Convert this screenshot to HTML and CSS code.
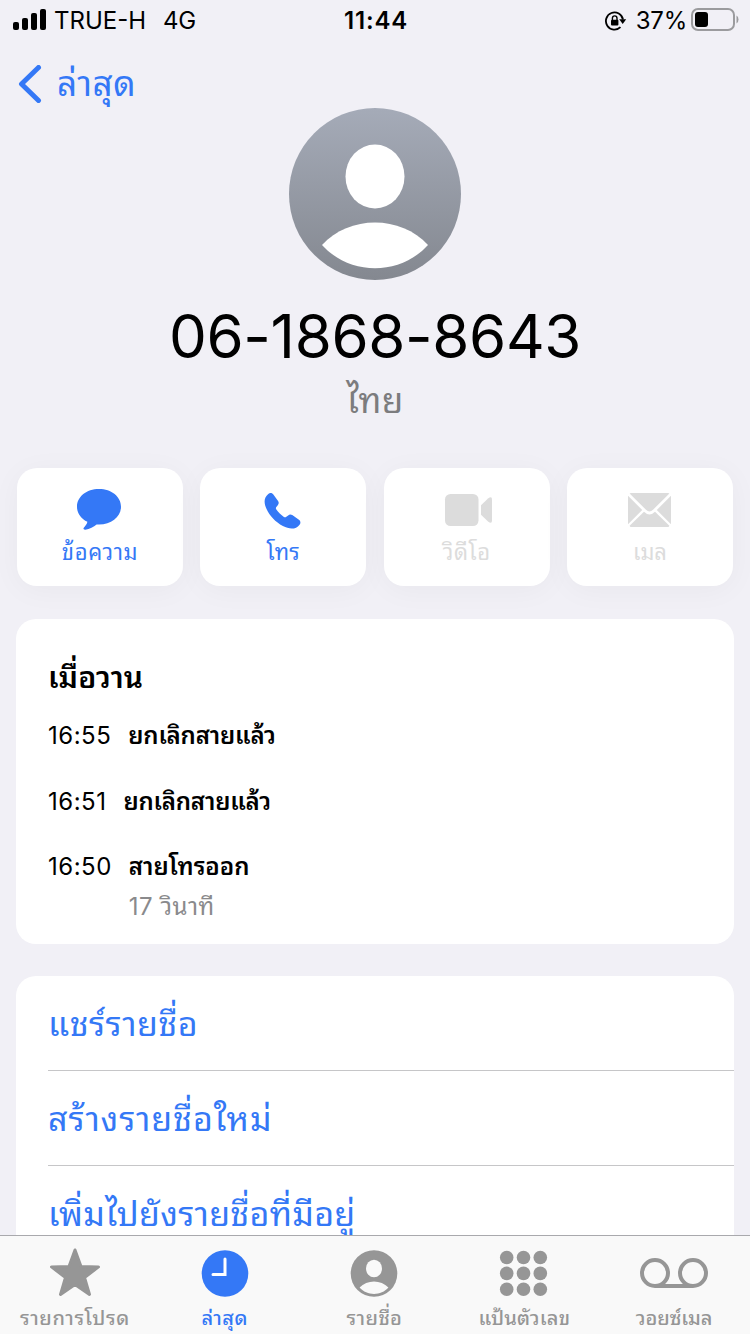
FILE: index.html
```html
<!DOCTYPE html>
<html lang="th">
<head>
    <meta charset="UTF-8">
    <meta name="viewport" content="width=device-width, initial-scale=1.0">
    <title>06-1868-8643</title>
    <link rel="stylesheet" href="styles.css">
</head>
<body>
    <div class="status-bar">
        <div class="status-left">
            <svg class="signal" width="34" height="22" viewBox="0 0 34 22">
                <rect x="0" y="13" width="6" height="8" rx="2"/>
                <rect x="9" y="9" width="6" height="12" rx="2"/>
                <rect x="18" y="4" width="6" height="17" rx="2"/>
                <rect x="27" y="0" width="6" height="21" rx="2"/>
            </svg>
            <span class="carrier">TRUE-H</span>
            <span class="network">4G</span>
        </div>
        <div class="status-time">11:44</div>
        <div class="status-right">
            <svg class="lock" width="22" height="20" viewBox="0 0 22 20">
                <path d="M15.5 16.2A8.6 8.6 0 1 1 18 8.5" fill="none" stroke="#000" stroke-width="1.8"/>
                <path d="M14.2 8.3h7l-3.5 4.6z"/>
                <rect x="6" y="8.8" width="7.4" height="5.6" rx="1"/>
                <path d="M7.4 9V7.2a2.3 2.3 0 0 1 4.6 0V9" fill="none" stroke="#000" stroke-width="1.4"/>
            </svg>
            <span class="percent">37%</span>
            <svg class="battery" width="48" height="24" viewBox="0 0 48 24">
                <rect x="1" y="1" width="42" height="21" rx="6" fill="none" stroke="#9b9b9e" stroke-width="2"/>
                <rect x="4" y="4" width="13" height="15" rx="3"/>
                <path d="M45.500 7.500q2 1 2 4t-2 4z" fill="#9b9b9e"/>
            </svg>
        </div>
    </div>

    <nav class="back">
        <svg width="24" height="38" viewBox="0 0 24 38">
            <path d="M20.500 2.500L3.500 19l17 16.500" fill="none" stroke="#3478f6" stroke-width="5" stroke-linecap="round" stroke-linejoin="round"/>
        </svg>
        <span class="back-label">ล่าสุด</span>
    </nav>

    <header>
        <svg class="avatar" width="172" height="172" viewBox="0 0 172 172">
            <defs>
                <linearGradient id="avatarFill" x1="0" y1="0" x2="0" y2="1">
                    <stop offset="0" stop-color="#a5abb8"/>
                    <stop offset="1" stop-color="#848890"/>
                </linearGradient>
            </defs>
            <circle cx="86" cy="86" r="86" fill="url(#avatarFill)"/>
            <ellipse cx="86" cy="68.500" rx="29.500" ry="32" fill="#fff"/>
            <path d="M33 137C60 107 112 107 139 137C111 168 61 168 33 137z" fill="#fff"/>
        </svg>
        <h1>06-1868-8643</h1>
        <p class="country">ไทย</p>
    </header>

    <div class="actions">
        <button class="action">
            <svg width="46" height="44" viewBox="1 0 46 44">
                <path d="M23 1C10.500 1 1 8.700 1 18.700c0 6.500 4 12.100 10.400 15.100-.5 2.300-1.800 4-3.600 5.900-.9 1 .1 2.200 1.500 2 4.500-.7 8.300-2.700 11.300-5.300l2.400.1C35.500 36.500 45 28.700 45 18.700S35.500 1 23 1z"/>
            </svg>
            <span class="msg-label">ข้อความ</span>
        </button>
        <button class="action">
            <svg width="46" height="44" viewBox="0 0 46 44">
                <path transform="translate(.4 .6) scale(.96)" d="M8.200 5.500C9.900 4 12 4.300 13.300 6L18.400 13c1 1.500.9 2.900-.3 4.300l-1.500 1.900c-.7.9-.6 1.600 0 2.500 2 2.900 4.900 5.700 7.900 7.800.9.600 1.700.6 2.500-.1l1.900-1.500c1.300-1.200 2.800-1.300 4.300-.3l6.900 4.800c1.800 1.300 2.100 3.300.7 5.200-4 5.400-10.600 4.900-17.400 1.400C15.700 34.900 9.600 28.300 6.400 21.300 3.500 14.800 3.400 9.500 8.200 5.500z"/>
            </svg>
            <span class="call-label">โทร</span>
        </button>
        <button class="action disabled">
            <svg width="50" height="44" viewBox="0 0 50 44">
                <rect x="3" y="6" width="33.500" height="32" rx="5.500"/>
                <path d="M39 17.300L46 10.600Q50 7.500 50 11.500v21q0 4-4 .9L39 26.700z"/>
            </svg>
            <span class="video-label">วิดีโอ</span>
        </button>
        <button class="action disabled">
            <svg width="46" height="44" viewBox="0 0 46 44">
                <path d="M4 5h37q1 0 1.400.6L26 21.800q-3.500 3.600-7 0L2.600 5.600Q3 5 4 5z"/>
                <path d="M1 7.800L15.200 22 1 36.200zM44 7.800L29.800 22 44 36.200z"/>
                <path d="M17 23.800q5.500 5.500 11 0l14.400 14q-.4 1.200-1.400 1.200H4q-1 0-1.400-1.200z"/>
            </svg>
            <span class="mail-label">เมล</span>
        </button>
    </div>

    <section class="card history">
        <h2>เมื่อวาน</h2>
        <div class="call">
            <span class="time">16:55</span>
            <span class="kind">ยกเลิกสายแล้ว</span>
        </div>
        <div class="call">
            <span class="time">16:51</span>
            <span class="kind">ยกเลิกสายแล้ว</span>
        </div>
        <div class="call last">
            <span class="time">16:50</span>
            <div>
                <div class="kind">สายโทรออก</div>
                <div class="duration">17 วินาที</div>
            </div>
        </div>
    </section>

    <section class="card options">
        <a class="option">แชร์รายชื่อ</a>
        <a class="option opt-new">สร้างรายชื่อใหม่</a>
        <a class="option opt-add">เพิ่มไปยังรายชื่อที่มีอยู่</a>
    </section>

    <footer class="tabs">
        <div class="tab">
            <svg width="70" height="50" viewBox="0 0 70 50">
                <path d="M35 3l6 16.500 17.500.4-14 10.600 5 16.900L35 37.500 20.500 47.400l5-16.900-14-10.600 17.500-.4z" stroke="#969696" stroke-width="3" stroke-linejoin="round"/>
            </svg>
            <span class="tab-fav">รายการโปรด</span>
        </div>
        <div class="tab active">
            <svg width="70" height="50" viewBox="0 0 70 50">
                <circle cx="35" cy="26.500" r="23.300"/>
                <path d="M35 12v15.500H23" fill="none" stroke="#fff" stroke-width="3" stroke-linecap="round"/>
            </svg>
            <span class="tab-recent">ล่าสุด</span>
        </div>
        <div class="tab">
            <svg width="70" height="50" viewBox="0 0 70 50">
                <circle cx="35" cy="26.500" r="23.300"/>
                <ellipse cx="35" cy="21.500" rx="8" ry="8.800" fill="#f9f9f9"/>
                <path d="M20.600 40.500C28 32.400 42 32.400 49.400 40.500C42 49 28 49 20.600 40.500z" fill="#f9f9f9"/>
            </svg>
            <span class="tab-contacts">รายชื่อ</span>
        </div>
        <div class="tab">
            <svg width="70" height="50" viewBox="0 0 70 50">
                <circle cx="17.700" cy="10.500" r="6.800"/><circle cx="34.500" cy="10.500" r="6.800"/><circle cx="51.300" cy="10.500" r="6.800"/>
                <circle cx="17.700" cy="26.400" r="6.800"/><circle cx="34.500" cy="26.400" r="6.800"/><circle cx="51.300" cy="26.400" r="6.800"/>
                <circle cx="17.700" cy="42.300" r="6.800"/><circle cx="34.500" cy="42.300" r="6.800"/><circle cx="51.300" cy="42.300" r="6.800"/>
            </svg>
            <span class="tab-keypad">แป้นตัวเลข</span>
        </div>
        <div class="tab">
            <svg width="70" height="50" viewBox="0 0 70 50">
                <g fill="none" stroke="#969696" stroke-width="4">
                    <circle cx="16" cy="26" r="13"/>
                    <circle cx="54" cy="26" r="13"/>
                    <path d="M16 39h38"/>
                </g>
            </svg>
            <span class="tab-voice">วอยซ์เมล</span>
        </div>
    </footer>
</body>
</html>
```
FILE: styles.css
```css
* {
    margin: 0;
    padding: 0;
    box-sizing: border-box;
}
body {
    width: 750px;
    height: 1334px;
    overflow: hidden;
    font-family: Inter, "Noto Sans Thai Looped", Loma, "Noto Sans Thai", "Noto Sans", sans-serif;
    background: #f1f0f6;
    color: #000;
    display: flex;
    flex-direction: column;
    white-space: nowrap;
}
svg {
    display: block;
    flex: none;
}
.status-bar {
    height: 40px;
    display: grid;
    grid-template-columns: 1fr auto 1fr;
    align-items: center;
    padding: 0 11px 0 13px;
    font-size: 24px;
    line-height: 38px;
}
.status-left, .status-right {
    display: flex;
    align-items: center;
}
.status-right {
    justify-content: flex-end;
}
.carrier, .network, .percent, .status-time {
    padding-top: 2px;
}
.signal {
    margin-top: -1px;
}
.carrier {
    margin-left: 7px;
}
.network {
    margin-left: 17px;
    letter-spacing: -0.3px;
}
.status-time {
    font-weight: 600;
    letter-spacing: 0.8px;
}
.lock {
    margin-top: 1px;
}
.percent {
    margin: 0 4px 0 9px;
    letter-spacing: -0.2px;
}
.back {
    height: 68px;
    display: flex;
    align-items: center;
    gap: 15px;
    padding: 20px 0 0 18px;
    color: #3478f6;
    font-size: 35px;
    line-height: 48px;
    letter-spacing: 0.6px;
}
.back-label {
    margin-top: -2px;
}
header {
    height: 360px;
    display: flex;
    flex-direction: column;
    align-items: center;
}
h1 {
    margin-top: 16px;
    height: 80px;
    line-height: 80px;
    font-size: 60px;
    font-weight: 400;
    letter-spacing: -0.35px;
}
.country {
    height: 48px;
    line-height: 48px;
    font-size: 35px;
    letter-spacing: 0.3px;
    color: #7c7c7e;
}
.actions {
    display: grid;
    grid-template-columns: repeat(4, 166px);
    justify-content: space-between;
    padding: 0 17px;
    height: 118px;
}
.action {
    border: none;
    border-radius: 20px;
    background: #fff;
    box-shadow: 0 4px 30px rgba(0, 0, 0, 0.04);
    display: flex;
    flex-direction: column;
    align-items: center;
    padding-top: 20px;
    font-family: inherit;
    font-size: 22px;
    line-height: 40px;
    color: #3478f6;
    fill: #3478f6;
}
.action.disabled {
    color: #dcdcdc;
    fill: #dcdcdc;
}
.msg-label {
    letter-spacing: 0.7px;
}
.call-label {
    letter-spacing: 0.3px;
}
.video-label {
    letter-spacing: 0.5px;
}
.card {
    margin: 33px 16px 0;
    background: #fff;
    border-radius: 20px;
}
.history {
    height: 325px;
    padding: 36px 32px 0;
}
h2 {
    height: 46px;
    line-height: 44px;
    font-size: 30px;
    font-weight: 600;
    letter-spacing: 0.1px;
}
.call {
    height: 66px;
    padding-top: 14px;
    display: flex;
    gap: 17px;
    font-size: 24px;
    line-height: 41px;
}
.call.last {
    padding-top: 13px;
}
.time {
    letter-spacing: 0.5px;
}
.kind {
    font-weight: 600;
    letter-spacing: -0.2px;
}
.call.last .kind {
    letter-spacing: 0;
}
.duration {
    color: #8a8a8c;
    letter-spacing: 0.5px;
    line-height: 40px;
}
.options {
    margin-top: 32px;
    height: 259px;
    flex: none;
    overflow: hidden;
    border-radius: 20px 20px 0 0;
    padding-left: 32px;
    color: #3478f6;
    font-size: 34px;
}
.option {
    display: block;
    height: 95px;
    line-height: 96px;
    border-bottom: 1px solid #c6c6c8;
    letter-spacing: 0.5px;
}
.opt-new {
    letter-spacing: 0.9px;
}
.opt-add {
    letter-spacing: 0.3px;
}
.tabs {
    height: 99px;
    flex: none;
    border-top: 1px solid #a9a9ad;
    background: #f9f9f9;
    display: grid;
    grid-template-columns: repeat(5, 1fr);
    padding-right: 1px;
    color: #969696;
    fill: #969696;
    font-size: 20px;
    font-weight: 500;
}
.tab {
    display: flex;
    flex-direction: column;
    align-items: center;
    padding-top: 11px;
    line-height: 42px;
    letter-spacing: 0.4px;
}
.tab-fav {
    letter-spacing: 0.6px;
}
.tab-keypad {
    letter-spacing: 0.2px;
}
.tab-voice {
    letter-spacing: -0.1px;
}
.active {
    color: #3478f6;
    fill: #3478f6;
}
```
